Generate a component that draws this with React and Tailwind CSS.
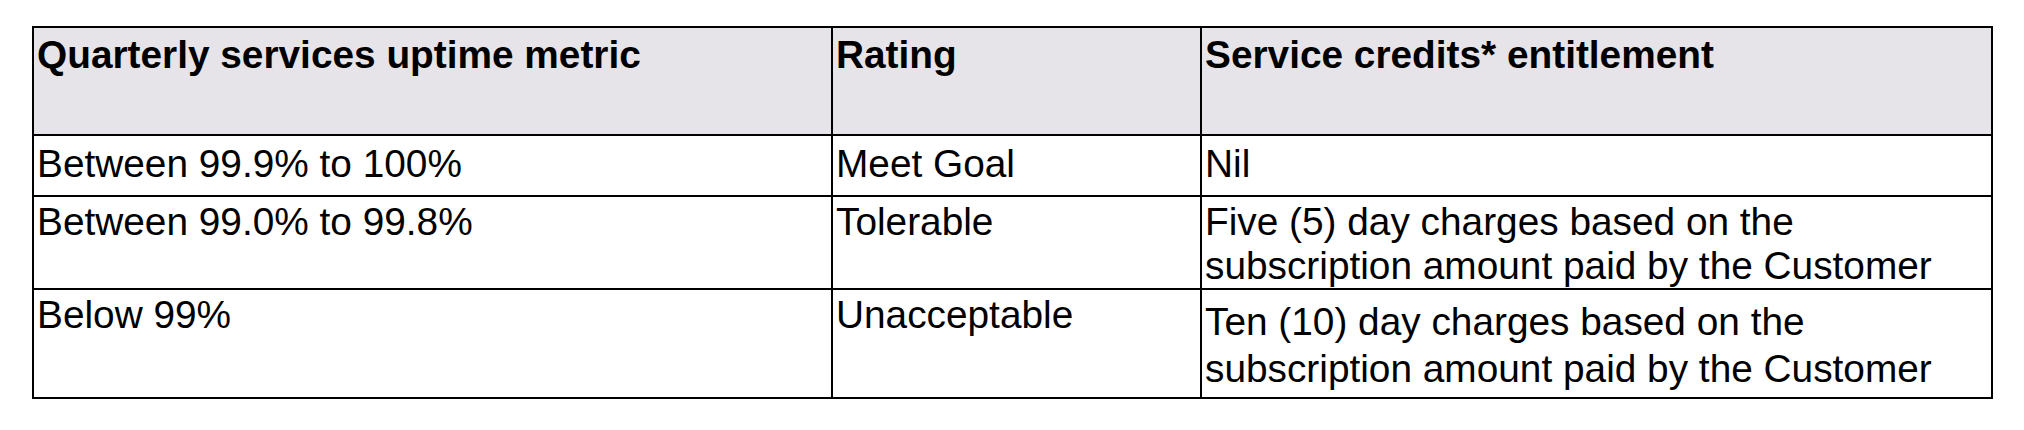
import React from 'react'

const ROWS = [
  { metric: 'Between 99.9% to 100%', rating: 'Meet Goal', credits: ['Nil'], h: 'h-[61px]', pt: 'pt-[6px]', ptc: 'pt-[6px]' },
  {
    metric: 'Between 99.0% to 99.8%',
    rating: 'Tolerable',
    credits: ['Five (5) day charges based on the', 'subscription amount paid by the Customer'],
    h: 'h-[92px]',
    pt: 'pt-[3px]',
    ptc: 'pt-[3px]',
  },
  {
    metric: 'Below 99%',
    rating: 'Unacceptable',
    credits: ['Ten (10) day charges based on the', 'subscription amount paid by the Customer'],
    h: 'h-[109px]',
    pt: 'pt-[3px]',
    ptc: 'pt-[8px] leading-[47px]',
  },
]

export default function App() {
  return (
    <div className="w-[2024px] h-[430px] bg-white pt-[26px] pl-[32px] font-['Liberation_Sans',Arial,sans-serif] text-black">
      <table className="table-fixed border-collapse w-[1961px] text-[38.8px] leading-[44px]">
        <colgroup>
          <col className="w-[799px]" />
          <col className="w-[369px]" />
          <col />
        </colgroup>
        <thead>
          <tr className="h-[108px] bg-[#e6e4e8]">
            <th className="border-2 border-black align-top text-left font-bold pl-[3px] pt-[5px]">Quarterly services uptime metric</th>
            <th className="border-2 border-black align-top text-left font-bold pl-[3px] pt-[5px]">Rating</th>
            <th className="border-2 border-black align-top text-left font-bold pl-[3px] pt-[5px]">Service credits* entitlement</th>
          </tr>
        </thead>
        <tbody>
          {ROWS.map((r) => (
            <tr key={r.metric} className={r.h}>
              <td className={`border-2 border-black align-top pl-[3px] ${r.pt}`}>{r.metric}</td>
              <td className={`border-2 border-black align-top pl-[3px] ${r.pt}`}>{r.rating}</td>
              <td className={`border-2 border-black align-top pl-[3px] ${r.ptc}`}>
                {r.credits.map((line) => (
                  <div key={line}>{line}</div>
                ))}
              </td>
            </tr>
          ))}
        </tbody>
      </table>
    </div>
  )
}
